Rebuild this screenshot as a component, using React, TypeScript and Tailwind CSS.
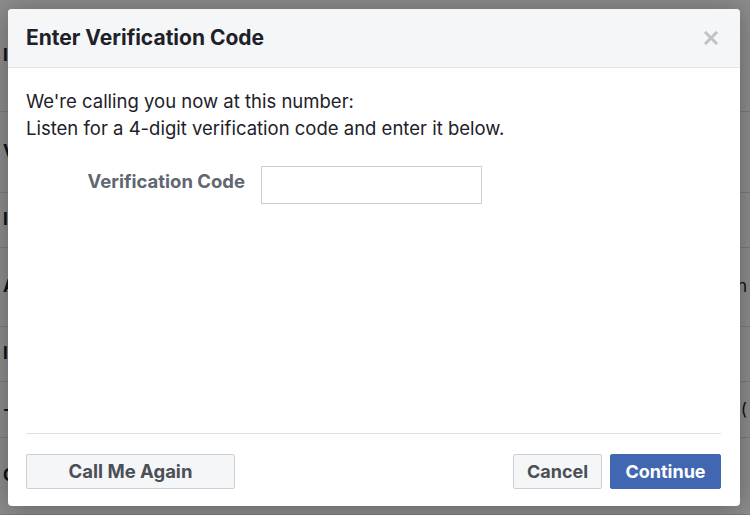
import React, { useState } from 'react';

const font = { fontFamily: 'Inter, "Liberation Sans", Arial, sans-serif' };

// Faint page rows that sit behind the dialog overlay
const pageRows = [
    { h: 'h-[112px]', left: 'Il', right: '' },
    { h: 'h-[81px]', left: 'V', right: '' },
    { h: 'h-[55px]', left: 'I', right: '' },
    { h: 'h-[79px]', left: 'Al', right: 'h' },
    { h: 'h-[55px]', left: 'I', right: '' },
    { h: 'h-[56px]', left: '-', right: 's (' },
    { h: 'h-[77px]', left: 'C', right: '' },
];

const App: React.FC = () => {
    const [code, setCode] = useState('');

    return (
        <div className="relative w-[750px] h-[515px] overflow-hidden bg-white" style={font}>
            {/* Underlying page */}
            <div className="flex flex-col">
                {pageRows.map((row, i) => (
                    <div
                        key={i}
                        className={`${row.h} flex items-center justify-between px-[3px] border-b border-[#dddfe2] text-[17px] text-[#1d2129]`}
                    >
                        <span className="font-bold">{row.left}</span>
                        <span>{row.right}</span>
                    </div>
                ))}
            </div>

            {/* Overlay */}
            <div className="absolute inset-0 bg-black/45" />

            {/* Dialog */}
            <div className="absolute left-[8px] top-[9px] w-[732px] h-[497px] flex flex-col bg-white rounded-[4px] overflow-hidden shadow-[0_2px_26px_rgba(0,0,0,0.3)]">
                <div className="h-[59px] shrink-0 flex items-center justify-between pl-[18px] pr-[21px] bg-[#f5f6f7] border-b border-[#e5e5e5]">
                    <h1 className="text-[21px] font-bold text-[#1d2129]">Enter Verification Code</h1>
                    <button className="w-[16px] h-[16px] flex items-center justify-center text-[#bec3c9]">
                        <svg width="14" height="14" viewBox="0 0 14 14">
                            <path d="M2 2 L12 12 M12 2 L2 12" stroke="currentColor" strokeWidth="3" strokeLinecap="square" />
                        </svg>
                    </button>
                </div>

                <div className="flex-1 flex flex-col pt-[20px] px-[18px]">
                    <p className="text-[18.5px] leading-[27px] text-[#1d2129]">
                        We're calling you now at this number: <br />
                        Listen for a 4-digit verification code and enter it below.
                    </p>

                    <div className="mt-[24px] flex items-center">
                        <label className="w-[219px] mb-[7px] text-right text-[18.5px] font-bold text-[#606770]">
                            Verification Code
                        </label>
                        <input
                            value={code}
                            onChange={(e) => setCode(e.target.value)}
                            className="ml-[16px] w-[221px] h-[38px] border border-[#c9ced6] px-[6px] text-[17px] outline-none"
                        />
                    </div>
                </div>

                <div className="ml-[18px] mr-[19px] border-t border-[#dddfe2] pt-[20px] pb-[17px] flex justify-between">
                    <button className="w-[209px] h-[35px] rounded-[2px] border border-[#ccd0d5] bg-[#f5f6f7] text-[18.5px] font-bold text-[#4b4f56]">
                        Call Me Again
                    </button>
                    <div className="flex gap-[8px]">
                        <button className="w-[89px] h-[35px] rounded-[2px] border border-[#ccd0d5] bg-[#f5f6f7] text-[18px] font-bold text-[#4b4f56]">
                            Cancel
                        </button>
                        <button className="w-[111px] h-[35px] rounded-[2px] border border-[#4267b2] bg-[#4267b2] text-[18px] font-bold text-white">
                            Continue
                        </button>
                    </div>
                </div>
            </div>
        </div>
    );
};

export default App;
